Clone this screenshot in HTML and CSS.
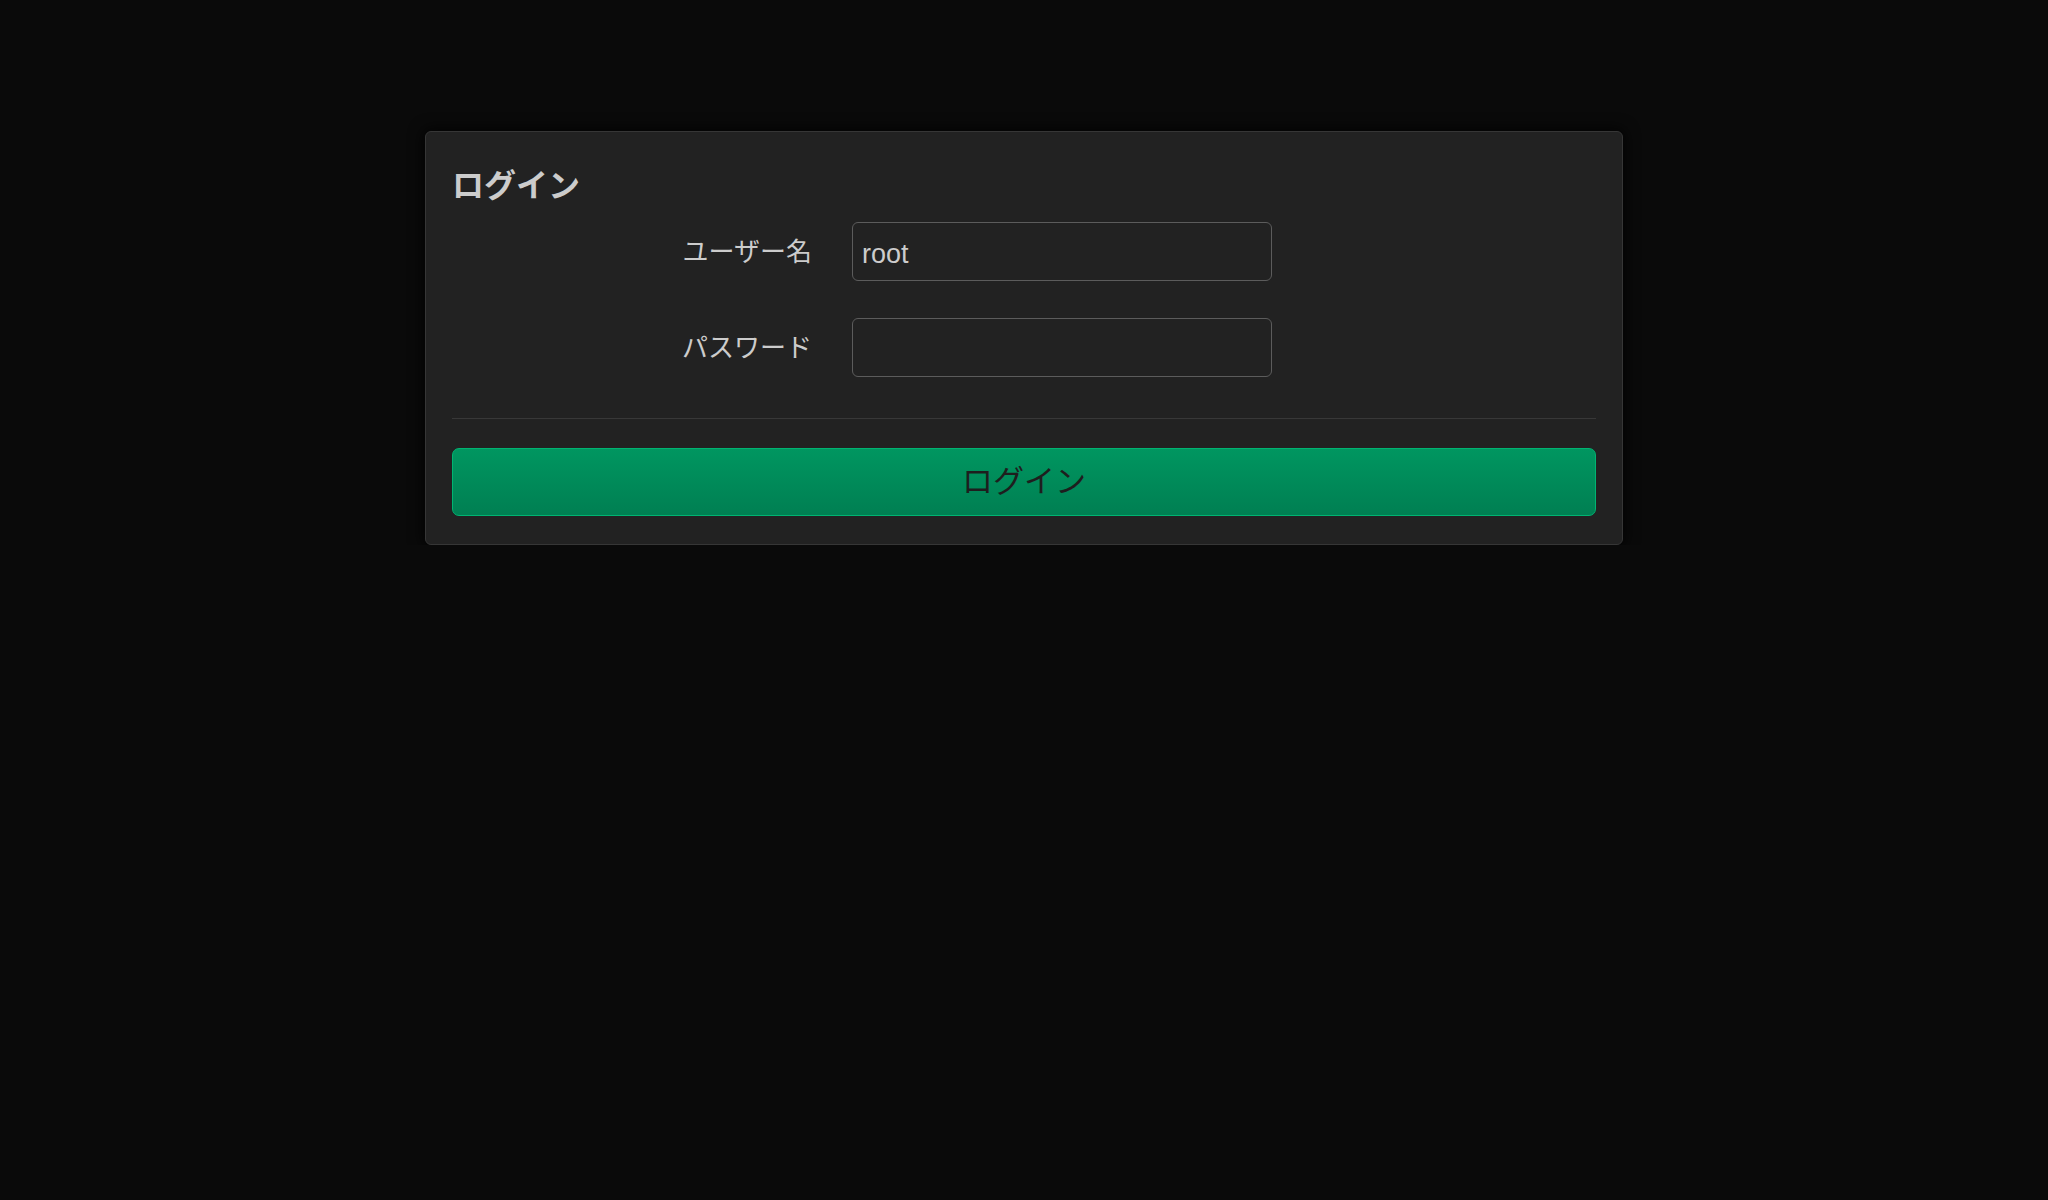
FILE: index.html
```html
<!DOCTYPE html>
<html lang="ja">
<head>
<meta charset="utf-8">
<title>ログイン</title>
<link rel="stylesheet" href="styles.css">
</head>
<body>
<main class="login-card">
  <h2 class="login-title">ログイン</h2>
  <form class="login-form">
    <div class="field-row">
      <label class="field-label" for="user">ユーザー名</label>
      <input class="field-input" id="user" type="text" value="root">
    </div>
    <div class="field-row">
      <label class="field-label" for="pass">パスワード</label>
      <input class="field-input" id="pass" type="password">
    </div>
    <hr class="divider">
    <button class="login-button" type="button">ログイン</button>
  </form>
</main>
</body>
</html>
```

FILE: styles.css
```css
html, body {
  margin: 0;
  padding: 0;
  background: #0a0a0a;
  font-family: "Liberation Sans", "Noto Sans CJK JP", sans-serif;
  color: #cccccc;
}

.login-card {
  box-sizing: border-box;
  width: 1198px;
  margin: 131px auto 0;
  padding: 0 26px 28px;
  background: #222222;
  border: 1px solid #363636;
  border-radius: 6px;
  box-shadow: 0 0 14px 3px rgba(0, 0, 0, 0.7);
}

.login-title {
  margin: 34px 0 0;
  font-size: 32px;
  line-height: 40px;
  font-weight: bold;
  color: #cccccc;
}

.login-form {
  margin: 16px 0 0;
  display: flex;
  flex-direction: column;
}

.field-row {
  display: flex;
  align-items: center;
  gap: 40px;
  margin-bottom: 37px;
}

.field-row:last-of-type {
  margin-bottom: 0;
}

.field-label {
  width: 360px;
  text-align: right;
  font-size: 26px;
  line-height: 32px;
  color: #cccccc;
}

.field-input {
  box-sizing: border-box;
  width: 420px;
  height: 59px;
  padding: 5px 9px 0;
  background: #222222;
  border: 1px solid #5c5c5c;
  border-radius: 6px;
  color: #cccccc;
  font-family: "Liberation Sans", "Noto Sans CJK JP", sans-serif;
  font-size: 27px;
  outline: none;
}

.divider {
  margin: 41px 0 0;
  border: 0;
  border-top: 1px solid #383838;
  height: 0;
}

.login-button {
  margin-top: 29px;
  box-sizing: border-box;
  width: 100%;
  height: 68px;
  background: linear-gradient(#009660, #007f52);
  border: 1px solid #00b472;
  border-radius: 7px;
  color: #1e1e1e;
  font-family: "Liberation Sans", "Noto Sans CJK JP", sans-serif;
  font-size: 31px;
  line-height: 40px;
  padding: 0;
  cursor: pointer;
}
```
